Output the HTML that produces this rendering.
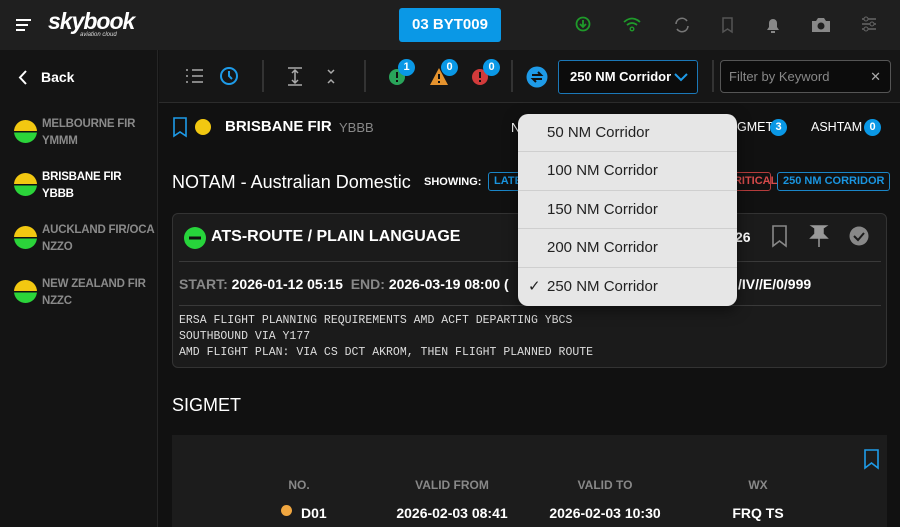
<!DOCTYPE html>
<html><head><meta charset="utf-8"><style>
*{margin:0;padding:0;box-sizing:border-box}
html,body{width:900px;height:527px;overflow:hidden}
body{background:#111;font-family:"Liberation Sans",sans-serif;color:#fff;position:relative}
.a{position:absolute}
.top{left:0;top:0;width:900px;height:50px;background:#1f1f1f}
.tb{left:159px;top:50px;width:741px;height:53px;background:#161616;border-bottom:1px solid #2c2c2c}
.side{left:0;top:50px;width:158px;height:477px;background:#141414;border-right:1px solid #262626}
.badge{width:17px;height:17px;border-radius:50%;background:#0a98e6;color:#fff;font-size:11px;font-weight:bold;text-align:center;line-height:17px}
.div{width:2px;height:32px;background:#333;top:60px}
.fir{left:42px;font-size:11.5px;font-weight:bold;color:#8a8a8a;line-height:17px;letter-spacing:-0.2px}
.dot{left:14px;width:23px;height:23px;border-radius:50%;background:linear-gradient(#f2c811 0 47%,#111 47% 55%,#2bd43a 55%)}
.chip{top:172px;height:19px;border:1px solid #1a86c8;border-radius:3px;color:#1a95e0;font-size:11px;font-weight:bold;line-height:17px;padding:0 5px}
.mono{font-family:"Liberation Mono",monospace;font-size:11.5px;color:#ddd;left:179px}
.hd{top:478px;font-size:12px;font-weight:bold;color:#888;width:120px;text-align:center}
.vl{top:505px;font-size:14px;font-weight:bold;width:140px;text-align:center}
.dd{left:518px;top:114px;width:219px;height:192px;background:#e6e6e6;border-radius:10px;box-shadow:0 4px 14px rgba(0,0,0,.5);overflow:hidden}
.it{height:38.4px;border-bottom:1px solid #cfcfcf;color:#222;font-size:15px;line-height:38px;padding-left:29px;position:relative}
</style></head><body>
<div class="a top"></div>
<svg class="a" style="left:16px;top:18px" width="16" height="14"><path d="M0 2H15M0 7H12M0 12H9" stroke="#fff" stroke-width="2"/></svg>
<div class="a" style="left:48px;top:8px;font-size:23px;font-weight:bold;font-style:italic;letter-spacing:-1px">skybook</div>
<div class="a" style="left:80px;top:32px;font-size:6px;font-style:italic;color:#ddd">aviation cloud</div>
<div class="a" style="left:399px;top:8px;width:102px;height:34px;background:#0a98e6;border-radius:3px;font-size:15px;font-weight:bold;text-align:center;line-height:34px">03 BYT009</div>
<svg class="a" style="left:574px;top:14px" width="310" height="22">
<circle cx="9" cy="10" r="6.5" fill="none" stroke="#1f9a2a" stroke-width="1.8"/><path d="M9 6v7M6 10l3 3 3-3" stroke="#1f9a2a" stroke-width="1.8" fill="none"/>
<path d="M50 8q8-7 16 0M53 11q5-4 10 0" stroke="#1f9a2a" stroke-width="1.8" fill="none"/><circle cx="58" cy="15" r="1.8" fill="none" stroke="#1f9a2a" stroke-width="1.4"/>
<path d="M102 10a6 6 0 0 1 11-3M114 12a6 6 0 0 1-11 3" stroke="#777" stroke-width="1.6" fill="none"/>
<path d="M149 4h9v14l-4.5-3-4.5 3z" stroke="#555" stroke-width="1.5" fill="none"/>
<path d="M193 16h12l-2-3v-4a4 4 0 0 0-8 0v4z M197 17h4v2h-4z" fill="#888"/>
<path d="M238 7h4l2-3h6l2 3h4v11h-18z" fill="#888"/><circle cx="247" cy="12" r="3.5" fill="#1f1f1f"/>
<path d="M288 5h14M288 10h14M288 15h14" stroke="#666" stroke-width="1.4"/><circle cx="292" cy="5" r="2" fill="#1f1f1f" stroke="#666"/><circle cx="298" cy="10" r="2" fill="#1f1f1f" stroke="#666"/><circle cx="292" cy="15" r="2" fill="#1f1f1f" stroke="#666"/>
</svg>
<div class="a side"></div>
<div class="a tb"></div>
<svg class="a" style="left:17px;top:69px" width="12" height="17"><path d="M9 2L3 8.5 9 15" stroke="#fff" stroke-width="2" fill="none"/></svg>
<div class="a" style="left:41px;top:69px;font-size:14px;font-weight:bold">Back</div>
<svg class="a" style="left:182px;top:65px" width="340" height="24">
<path d="M4 5h2M10 5h11M4 11h2M10 11h11M4 17h2M10 17h11" stroke="#aaa" stroke-width="1.6"/>
<circle cx="47" cy="11" r="8" fill="none" stroke="#1e9be8" stroke-width="2"/><path d="M47 6v5l3 3" stroke="#1e9be8" stroke-width="2" fill="none"/>
<path d="M106 3h14M106 20h14M113 6v11M110 8l3-3 3 3M110 15l3 3 3-3" stroke="#aaa" stroke-width="1.5" fill="none"/>
<path d="M146 5l3 3 3-3M146 18l3-3 3 3" stroke="#aaa" stroke-width="1.5" fill="none"/>
<circle cx="215" cy="12" r="8" fill="#29a45a"/><path d="M215 7v6M215 15v2" stroke="#111" stroke-width="2"/>
<path d="M257 3l9 17h-18z" fill="#e5932e"/><path d="M257 9v5M257 16v2" stroke="#111" stroke-width="2"/>
<circle cx="298" cy="12" r="8" fill="#d23b3b"/><path d="M298 7v6M298 15v2" stroke="#111" stroke-width="2"/>
</svg>
<div class="a badge" style="left:398px;top:59px">1</div>
<div class="a badge" style="left:441px;top:59px">0</div>
<div class="a badge" style="left:483px;top:59px">0</div>
<svg class="a" style="left:526px;top:66px" width="22" height="22"><circle cx="11" cy="11" r="10.5" fill="#1e9be8"/><path d="M6 9h9l-3-3M16 13H7l3 3" stroke="#111" stroke-width="2" fill="none"/></svg>
<div class="a div" style="left:262px"></div><div class="a div" style="left:364px"></div><div class="a div" style="left:511px"></div><div class="a div" style="left:712px"></div>
<div class="a" style="left:558px;top:60px;width:140px;height:34px;border:1px solid #1b78b8;border-radius:3px;background:#0c0c0c;font-size:13px;font-weight:bold;line-height:32px;padding-left:11px">250 NM Corridor</div>
<svg class="a" style="left:674px;top:72px" width="14" height="10"><path d="M1 2l6 6 6-6" stroke="#1e9be8" stroke-width="2" fill="none"/></svg>
<div class="a" style="left:720px;top:60px;width:171px;height:33px;border:1px solid #555;border-radius:4px;background:#0c0c0c;font-size:13px;color:#888;line-height:31px;padding-left:8px">Filter by Keyword<span style="position:absolute;right:9px;color:#aaa">✕</span></div>

<div class="a dot" style="top:120px"></div>
<div class="a fir" style="top:116px">MELBOURNE FIR<br>YMMM</div>
<div class="a dot" style="top:173px"></div>
<div class="a fir" style="top:169px;color:#fff">BRISBANE FIR<br>YBBB</div>
<div class="a dot" style="top:226px"></div>
<div class="a fir" style="top:222px">AUCKLAND FIR/OCA<br>NZZO</div>
<div class="a dot" style="top:280px"></div>
<div class="a fir" style="top:276px">NEW ZEALAND FIR<br>NZZC</div>

<svg class="a" style="left:172px;top:116px" width="40" height="22"><path d="M2 2h12v18l-6-4-6 4z" fill="none" stroke="#1e9be8" stroke-width="1.6"/><circle cx="31" cy="11" r="8" fill="#f2c811"/></svg>
<div class="a" style="left:225px;top:118px;font-size:15px;font-weight:bold">BRISBANE FIR</div>
<div class="a" style="left:339px;top:120px;font-size:13px;color:#888">YBBB</div>
<div class="a" style="left:511px;top:120px;font-size:13px">N</div>
<div class="a" style="left:737px;top:120px;font-size:12.5px">GMET</div>
<div class="a badge" style="left:770px;top:119px">3</div>
<div class="a" style="left:811px;top:120px;font-size:12.5px">ASHTAM</div>
<div class="a badge" style="left:864px;top:119px">0</div>

<div class="a" style="left:172px;top:172px;font-size:18px">NOTAM - Australian Domestic</div>
<div class="a" style="left:424px;top:176px;font-size:11px;font-weight:bold">SHOWING:</div>
<div class="a chip" style="left:488px;width:40px;overflow:hidden">LATEST</div>
<div class="a chip" style="left:720px;width:51px;border-color:#b53c3c;color:#d54a4a;text-align:right">CRITICAL</div>
<div class="a chip" style="left:777px">250 NM CORRIDOR</div>

<div class="a" style="left:172px;top:213px;width:715px;height:155px;background:#1b1b1b;border:1px solid #333;border-radius:6px"></div>
<div class="a" style="left:179px;top:261px;width:702px;height:1px;background:#3a3a3a"></div>
<div class="a" style="left:179px;top:305px;width:702px;height:1px;background:#3a3a3a"></div>
<svg class="a" style="left:183px;top:226px" width="24" height="24"><circle cx="12" cy="12" r="11" fill="#27d43b"/><path d="M6 12h12" stroke="#111" stroke-width="3"/></svg>
<div class="a" style="left:211px;top:228px;font-size:16px;font-weight:bold">ATS-ROUTE / PLAIN LANGUAGE</div>
<div class="a" style="left:735px;top:229px;font-size:14px;font-weight:bold">26</div>
<svg class="a" style="left:770px;top:224px" width="100" height="26"><path d="M3 2h13v20l-6.5-5-6.5 5z" fill="none" stroke="#888" stroke-width="1.6"/><path d="M42 2h14l-3 2v6l4 4H41l4-4V4zM49 14v9" fill="#999" stroke="#999" stroke-width="1.5"/><circle cx="89" cy="12" r="9.5" fill="#888"/><path d="M84 12l4 4 6-7" stroke="#1b1b1b" stroke-width="2" fill="none"/></svg>
<div class="a" style="left:179px;top:276px;font-size:14px;color:#888;font-weight:bold">START: <span style="color:#fff">2026-01-12 05:15</span>&nbsp;&nbsp;END: <span style="color:#fff">2026-03-19 08:00 (</span></div>
<div class="a" style="left:738px;top:276px;font-size:14px;font-weight:bold">/IV//E/0/999</div>
<div class="a mono" style="top:314px">ERSA FLIGHT PLANNING REQUIREMENTS AMD ACFT DEPARTING YBCS</div>
<div class="a mono" style="top:330px">SOUTHBOUND VIA Y177</div>
<div class="a mono" style="top:346px">AMD FLIGHT PLAN: VIA CS DCT AKROM, THEN FLIGHT PLANNED ROUTE</div>

<div class="a" style="left:172px;top:395px;font-size:18px">SIGMET</div>
<div class="a" style="left:172px;top:435px;width:715px;height:92px;background:#1c1c1c"></div>
<svg class="a" style="left:863px;top:448px" width="18" height="22"><path d="M2 2h13v18l-6.5-5-6.5 5z" fill="none" stroke="#1e9be8" stroke-width="1.6"/></svg>
<div class="a hd" style="left:239px">NO.</div>
<div class="a hd" style="left:392px">VALID FROM</div>
<div class="a hd" style="left:545px">VALID TO</div>
<div class="a hd" style="left:698px">WX</div>
<div class="a" style="left:281px;top:505px;width:11px;height:11px;border-radius:50%;background:#f0a640"></div>
<div class="a" style="left:301px;top:505px;font-size:14px;font-weight:bold">D01</div>
<div class="a vl" style="left:382px">2026-02-03 08:41</div>
<div class="a vl" style="left:535px">2026-02-03 10:30</div>
<div class="a vl" style="left:688px">FRQ TS</div>

<div class="a dd">
<div class="it">50 NM Corridor</div>
<div class="it">100 NM Corridor</div>
<div class="it">150 NM Corridor</div>
<div class="it">200 NM Corridor</div>
<div class="it" style="border:0"><span style="position:absolute;left:10px">✓</span>250 NM Corridor</div>
</div>
</body></html>
